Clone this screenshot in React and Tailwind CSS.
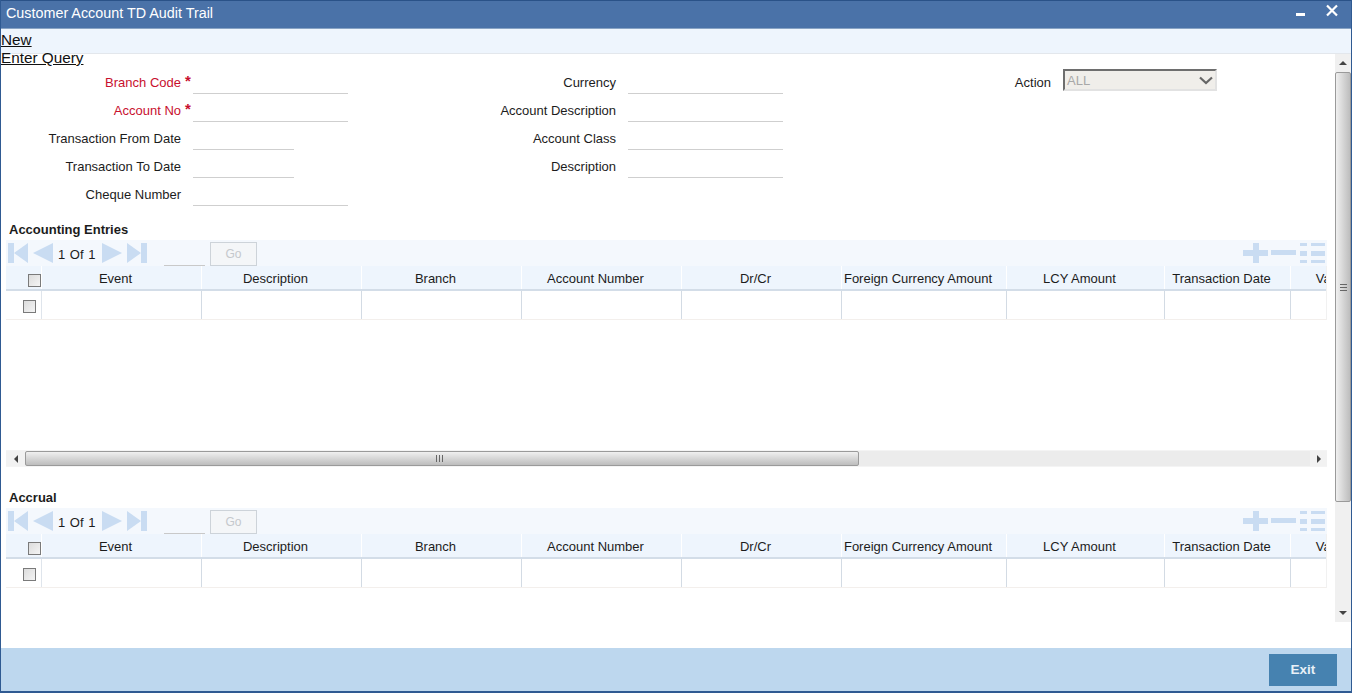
import React from "react";

const Field = ({ label, required, short }) => (
  <div className="flex h-[28px] items-center">
    <span className={`w-[180px] pt-[5px] text-right text-[13px] ${required ? "text-[#c8102e]" : "text-[#1c1c1c]"}`}>{label}</span>
    <span className="h-[28px] w-[12px] pl-[4px] pt-[7px] text-[15px] font-bold leading-[15px] text-[#c8102e]">{required ? "*" : ""}</span>
    <input readOnly className={`h-[28px] border-b-[1px] border-[#cfcfcf] bg-white outline-none ${short ? "w-[101px]" : "w-[155px]"}`} />
  </div>
);

const columns = [
  ["Event", 160], ["Description", 160], ["Branch", 160], ["Account Number", 160], ["Dr/Cr", 160],
  ["Foreign Currency Amount", 165], ["LCY Amount", 158], ["Transaction Date", 126], ["Value Date", 126],
];

const Check = () => <span className="block h-[13px] w-[13px] border border-[#7a7a7a] bg-linear-to-br from-[#dcdcdc] to-[#f4f4f4]" />;

const Grip = ({ vertical }) => (
  <svg width="9" height="9" viewBox="0 0 9 9" className={`shrink-0 ${vertical ? "rotate-90" : ""}`} stroke="#666" strokeWidth="1">
    <path d="M1.5 1v7M4.5 1v7M7.5 1v7" />
  </svg>
);

const Nav = () => (
  <div className="flex h-[26px] w-[1321px] items-center bg-[#f4f8fd] text-[#1c1c1c]">
    <svg width="142" height="22" viewBox="0 0 142 22" className="ml-[2px] shrink-0" fill="#c9dcf2">
      <path d="M0 1h6v20H0zM6 11 20 1v20zM25 11 45 1v20z" />
      <path d="M94 1l20 10-20 10zM119 1l14 10-14 10zM133 1h6v20h-6z" />
    </svg>
    <div className="w-0 -translate-x-[92px] translate-y-[2px] whitespace-pre text-[13px] [word-spacing:1px]">1 Of 1</div>
    <div className="ml-[14px] h-[20px] w-[41px] self-end border-b border-[#c9c9c9]" />
    <button className="ml-[5px] h-[24px] w-[47px] self-end border border-[#cdd3d9] bg-[#f4f6f8] text-[12px] text-[#c4c8cc]">Go</button>
    <svg width="82" height="20" viewBox="0 0 82 20" className="ml-auto mr-[2px] shrink-0" fill="#c9dcf2">
      <path d="M0 7h10V0h6v7h9v6h-9v7h-6v-7H0zM28 7h25v5H28z" />
      <path d="M57 0h7v3h-7zM68 0h14v3H68zM57 8h7v5h-7zM68 8h14v5H68zM57 17h7v3h-7zM68 17h14v3H68z" />
    </svg>
  </div>
);

const Grid = () => (
  <div className="w-[1321px] overflow-hidden border-r border-[#f1f1f1]">
    <div className="flex h-[25px] w-max border-b-2 border-[#d3dde8] bg-[#eef5fd]">
      <div className="flex w-[36px] shrink-0 items-start justify-end border-r border-[#ffffff] pt-[8px]"><Check /></div>
      {columns.map(([name, w]) => (
        <div key={name} style={{ width: w }} className="flex shrink-0 items-center justify-center whitespace-nowrap border-r border-white pr-[12px] pt-[2px] text-[13px] text-[#1c1c1c]">{name}</div>
      ))}
    </div>
    <div className="flex h-[29px] w-max border-b border-[#f3efec]">
      <div className="flex w-[36px] shrink-0 items-center justify-end border-r border-[#dfe5ec] pr-[5px] pt-[2px]"><Check /></div>
      {columns.map(([name, w]) => (
        <div key={name} style={{ width: w }} className="shrink-0 border-r border-[#d3dbe4]" />
      ))}
    </div>
  </div>
);

const HScroll = () => (
  <div className="flex h-[17px] w-[1321px] items-center border-y border-[#f4f4f4] bg-[#ececec]">
    <div className="flex h-[15px] w-[19px] items-center justify-center bg-[#f2f2f2]">
      <span className="h-0 w-0 border-y-[4px] border-r-[4px] border-y-transparent border-r-[#444]" />
    </div>
    <div className="flex h-[15px] w-[834px] items-center justify-center rounded-[2px] border border-[#9a9a9a] bg-linear-to-b from-[#f0f0f0] to-[#bdbdbd] pr-[6px]">
      <Grip />
    </div>
    <div className="ml-auto flex h-[15px] w-[17px] items-center justify-center bg-[#f2f2f2]">
      <span className="h-0 w-0 border-y-[4px] border-l-[4px] border-y-transparent border-l-[#444]" />
    </div>
  </div>
);

const Heading = ({ children, className }) => (
  <div className={`flex h-[18px] items-center pl-[3px] pt-[2px] text-[13px] font-bold text-[#1c1c1c] ${className}`}>{children}</div>
);

export default function App() {
  return (
    <div className="flex h-[693px] w-[1352px] flex-col overflow-hidden border-x border-b-2 border-[#2f5a92] bg-white font-['Liberation_Sans',Arial,sans-serif]">
      <div className="flex h-[29px] shrink-0 items-center border-t border-b border-t-[#2a5288] border-b-[#88a3c4] bg-[#4a72a8] pl-[5px] pb-[2px] text-[14.35px] text-white">
        <span>Customer Account TD Audit Trail</span>
        <svg width="42" height="13" viewBox="0 0 42 13" className="ml-auto mb-[6px] mr-[13px]" fill="none" stroke="white">
          <path d="M0 10.5h9" strokeWidth="3" />
          <path d="M31 1.5l10 10M41 1.5l-10 10" strokeWidth="2.2" />
        </svg>
      </div>

      <div className="h-[25px] shrink-0 border-b border-[#e3e7ec] bg-[#eef5fd] pt-[2px] text-[15.3px] leading-[18px] text-[#111]">
        <div className="underline">New</div>
        <div className="relative z-10 underline">Enter Query</div>
      </div>

      <div className="flex h-[568px] shrink-0">
        <div className="w-[1334px] overflow-hidden pl-[5px]">
          <div className="-ml-[5px] mt-[12px] flex">
            <div className="w-[435px]">
              <Field label="Branch Code" required />
              <Field label="Account No" required />
              <Field label="Transaction From Date" short />
              <Field label="Transaction To Date" short />
              <Field label="Cheque Number" />
            </div>
            <div className="w-[435px]">
              <Field label="Currency" />
              <Field label="Account Description" />
              <Field label="Account Class" />
              <Field label="Description" />
            </div>
            <div className="flex h-[28px] items-center">
              <span className="w-[180px] pt-[5px] text-right text-[13px] text-[#1c1c1c]">Action</span>
              <div className="ml-[12px] flex h-[22px] w-[154px] items-center justify-between border-2 border-t-[#6e6e6e] border-l-[#6e6e6e] border-r-[#e2e2e2] border-b-[#e2e2e2] bg-[#f0eeea] pl-[2px] pr-[2px] pt-[1px] text-[13px] text-[#a8a8a8]">
                <span>ALL</span>
                <svg width="14" height="9" viewBox="0 0 14 9" fill="none" stroke="#666" strokeWidth="2.2">
                  <path d="M1 1.5l6 5.5 6-5.5" />
                </svg>
              </div>
            </div>
          </div>

          <Heading className="mt-[14px]">Accounting Entries</Heading>
          <div className="mt-[2px]">
            <Nav />
            <Grid />
            <div className="h-[130px]" />
            <HScroll />
          </div>

          <Heading className="mt-[21px]">Accrual</Heading>
          <div className="mt-[2px]">
            <Nav />
            <Grid />
          </div>
        </div>

        <div className="flex w-[16px] flex-col bg-[#f0f0f0]">
          <div className="flex h-[18px] items-center justify-center">
            <span className="h-0 w-0 border-x-[4px] border-b-[4px] border-x-transparent border-b-[#444]" />
          </div>
          <div className="flex h-[430px] items-center justify-center rounded-[2px] border border-[#9a9a9a] bg-linear-to-r from-[#f0f0f0] to-[#bdbdbd]">
            <Grip vertical />
          </div>
          <div className="mt-auto flex h-[18px] items-center justify-center">
            <span className="h-0 w-0 border-x-[4px] border-t-[4px] border-x-transparent border-t-[#444]" />
          </div>
        </div>
      </div>

      <div className="flex-1" />

      <div className="flex h-[43px] shrink-0 items-center justify-end bg-[#bdd7ee] pr-[14px]">
        <button className="h-[32px] w-[68px] bg-[#4682b0] pt-[1px] text-[13.5px] font-bold text-[#e8f0f7]">Exit</button>
      </div>
    </div>
  );
}
